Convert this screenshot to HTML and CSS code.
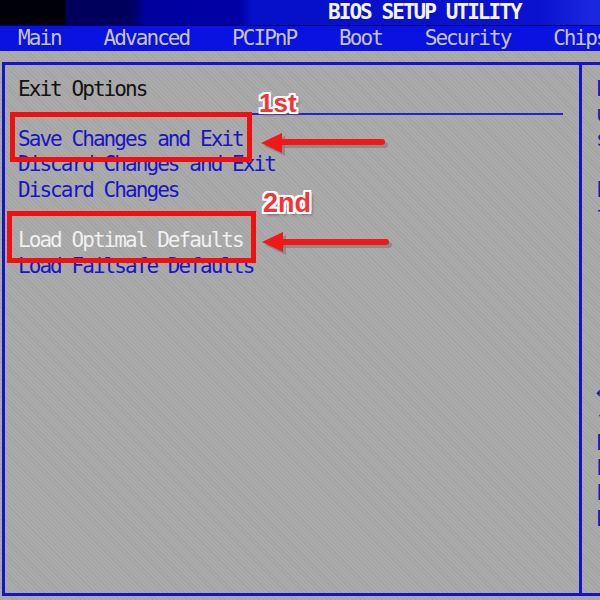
FILE: index.html
```html
<!DOCTYPE html>
<html>
<head>
<meta charset="utf-8">
<title>BIOS SETUP UTILITY</title>
<link rel="stylesheet" href="styles.css">
</head>
<body>
<div class="screen">
  <header class="titlebar"><span class="title">BIOS SETUP UTILITY</span></header>
  <nav class="menubar">Main    Advanced    PCIPnP    Boot    Security    Chipset    Exit</nav>
  <div class="gap"></div>
  <main class="panel">
    <section class="left">
      <div class="row heading">Exit Options</div>
      <div class="sep"></div>
      <div class="row item">Save Changes and Exit</div>
      <div class="row item">Discard Changes and Exit</div>
      <div class="row item">Discard Changes</div>
      <div class="row">&nbsp;</div>
      <div class="row item active">Load Optimal Defaults</div>
      <div class="row item">Load Failsafe Defaults</div>
    </section>
    <aside class="right">
      <div class="help">
        <div class="row">Exit system setup</div>
        <div class="row">upon saving the</div>
        <div class="row">settings.</div>
        <div class="row">&nbsp;</div>
        <div class="row">F10 key can be used</div>
        <div class="row">for this operation.</div>
      </div>
      <div class="keys">
        <div class="row">←→ Select Screen</div>
        <div class="row">↑↓ Select Item</div>
        <div class="row">Enter Go to Sub Screen</div>
        <div class="row">F1 General Help</div>
        <div class="row">F10 Save and Exit</div>
        <div class="row">ESC Exit</div>
      </div>
    </aside>
  </main>

  <div class="mark mark-1"></div>
  <div class="mark mark-2"></div>
  <div class="label label-1">1st</div>
  <div class="label label-2">2nd</div>
  <svg class="arrows" width="600" height="600" viewBox="0 0 600 600">
    <g class="shadow">
      <line x1="278" y1="145" x2="385" y2="145"/>
      <polygon points="264,146 285,136 285,156"/>
      <line x1="279" y1="245" x2="389" y2="245"/>
      <polygon points="265,245 286,235 286,255"/>
    </g>
    <g class="arrow">
      <line x1="276" y1="142" x2="382" y2="142"/>
      <polygon points="261,143 282,133 282,153"/>
      <line x1="277" y1="242" x2="386" y2="242"/>
      <polygon points="262,242 283,232 283,252"/>
    </g>
  </svg>
</div>
</body>
</html>
```

FILE: styles.css
```css
html, body {
  margin: 0;
  padding: 0;
  background: #a8a8a8;
}

.screen {
  position: relative;
  width: 600px;
  height: 600px;
  overflow: hidden;
  background-color: #a8a8a8;
  background-image: repeating-linear-gradient(45deg, #a3a3a3 0 1px, #ababab 1px 3px);
  font-family: "DejaVu Sans Mono", "Liberation Mono", monospace;
  font-size: 21px;
  letter-spacing: -1.94px;
}

.titlebar {
  height: 25px;
  line-height: 25px;
  padding-left: 328px;
  background: linear-gradient(to right,
    #000008 0, #000008 65px,
    #00005c 66px, #00005c 130px,
    #00007c 138px,
    #00009e 145px, #0000a6 240px,
    #0610c8 252px, #0a12d0 540px, #1a26e0 590px, #1a26e0 100%);
  white-space: nowrap;
}

.title {
  color: #f4f4f4;
  font-weight: bold;
}

.menubar {
  height: 26px;
  box-sizing: border-box;
  border-top: 1px solid #000070;
  line-height: 25px;
  padding-left: 18px;
  background: #0a12e2;
  color: #c4c4c4;
  white-space: pre;
  overflow: hidden;
}

.gap {
  height: 11px;
}

.panel {
  display: flex;
  margin-left: 2px;
  width: 640px;
  height: 534px;
  box-sizing: border-box;
  border: 3px solid #1414cc;
  border-right: none;
}

.left {
  width: 574px;
  flex: none;
  box-sizing: border-box;
  padding: 11.5px 16px 0 13px;
}

.right {
  flex: 1;
  border-left: 3px solid #1414cc;
  padding: 11.5px 0 0 14px;
  color: #1616c4;
  white-space: nowrap;
  display: flex;
  flex-direction: column;
}

.keys {
  margin-top: 151.8px;
}

.row {
  height: 25.3px;
  line-height: 25.3px;
  white-space: pre;
}

.heading {
  color: #121212;
}

.item {
  color: #1616c4;
}

.item.active {
  color: #f0f0f0;
}

.sep {
  height: 25.3px;
  display: flex;
  align-items: center;
  margin-left: -8px;
}

.sep::before {
  content: "";
  flex: 1;
  height: 2px;
  background: #2424d0;
}

/* annotation overlays */
.mark {
  position: absolute;
  box-sizing: border-box;
  border: 5px solid #f01010;
}

.mark-1 {
  left: 10px;
  top: 112px;
  width: 242px;
  height: 50px;
}

.mark-2 {
  left: 7px;
  top: 211px;
  width: 249px;
  height: 52px;
}

.label {
  position: absolute;
  font-family: "Liberation Sans", Arial, sans-serif;
  font-weight: bold;
  letter-spacing: 0;
  line-height: 1;
  color: #f43434;
  text-shadow:
    2px 0 0 #fff, -2px 0 0 #fff, 0 2px 0 #fff, 0 -2px 0 #fff,
    2px 2px 0 #fff, -2px -2px 0 #fff, 2px -2px 0 #fff, -2px 2px 0 #fff,
    3px 3px 3px #6a6a6a;
}

.label-1 {
  left: 259px;
  top: 90px;
  font-size: 26px;
}

.label-2 {
  left: 263px;
  top: 190px;
  font-size: 27px;
}

.arrows {
  position: absolute;
  left: 0;
  top: 0;
  pointer-events: none;
}

.arrows line {
  stroke-width: 6;
  stroke-linecap: round;
}

.shadow line {
  stroke: #7a7a7a;
  opacity: 0.6;
}

.shadow polygon {
  fill: #7a7a7a;
  opacity: 0.6;
}

.arrow line {
  stroke: #f21818;
}

.arrow polygon {
  fill: #f21818;
}
```
